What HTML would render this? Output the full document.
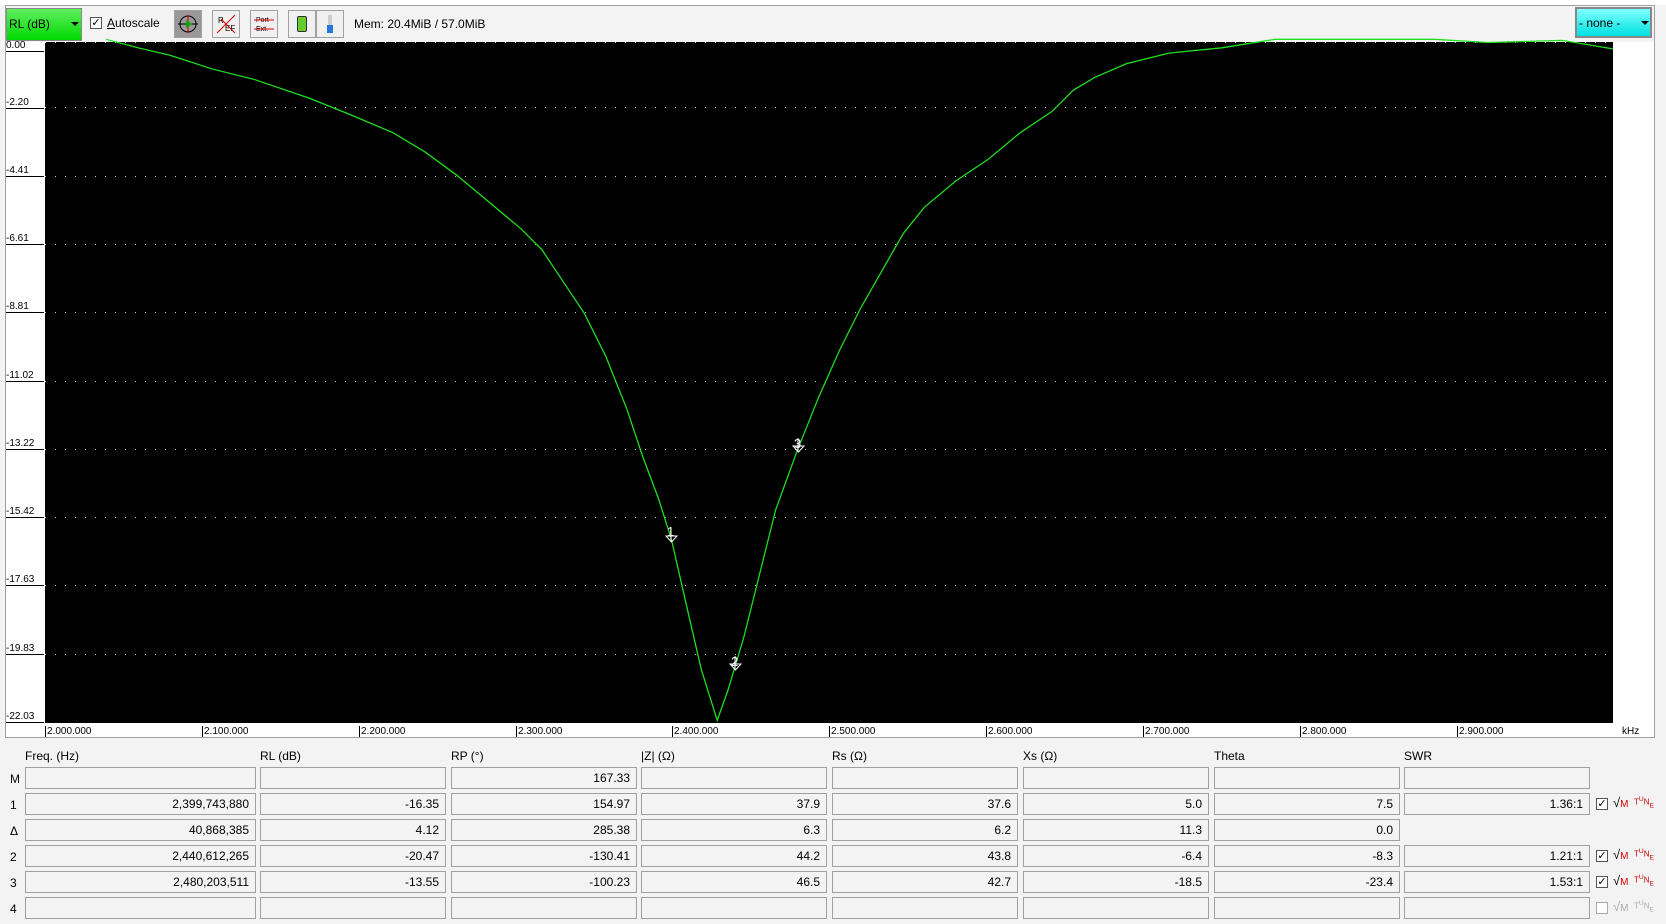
<!DOCTYPE html>
<html><head><meta charset="utf-8"><style>
*{margin:0;padding:0;box-sizing:border-box}
body{width:1666px;height:924px;background:#f3f3f3;font-family:"Liberation Sans",sans-serif;font-size:12px;color:#000;position:relative;overflow:hidden}
.a{position:absolute}
.btn{position:absolute;top:10px;width:28px;height:28px;border:1px solid #a0a0a0;background:#f0f0f0}
.box{position:absolute;height:22px;border:1px solid #a0a0a0;background:#f3f3f3;text-align:right;padding-right:6px;line-height:20px;font-size:12px}
.hd{position:absolute;top:749px;font-size:12px}
.rl{position:absolute;left:10px;font-size:12px}
.yl{position:absolute;left:6px;font-size:10px;width:38px;border-bottom:1px solid #000;line-height:11px}
.xl{position:absolute;top:726px;font-size:10px;border-left:1px solid #000;padding-left:1px;line-height:11px}
.cb{position:absolute;width:12px;height:12px;border:1px solid #555;background:#fff;font-size:11px;line-height:10px;text-align:center}
.ic{position:absolute;font-size:10px;color:#c00;font-weight:bold}
</style></head><body>
<div class="a" style="left:0;top:0;width:1666px;height:5px;background:#fff"></div>
<div class="a" style="left:5px;top:5px;width:1650px;height:733px;border:1px solid #a0a0a0;background:#fff"></div>
<div class="a" style="left:6px;top:6px;width:1648px;height:36px;background:#f3f3f3"></div>
<div class="a" style="left:6px;top:8px;width:76px;height:33px;background:linear-gradient(#60f060,#00d800);border:1px solid #888;"></div>
<div class="a" style="left:9px;top:17px;font-size:12px">RL (dB)</div>
<div class="a" style="left:71px;top:22px;border-left:4px solid transparent;border-right:4px solid transparent;border-top:4px solid #000"></div>
<div class="cb" style="left:90px;top:17px">✓</div>
<div class="a" style="left:107px;top:16px"><u>A</u>utoscale</div>
<div class="btn" style="left:174px;background:#999"><svg width="26" height="26"><circle cx="13" cy="13" r="8" fill="none" stroke="#000"/><line x1="3" y1="13" x2="23" y2="13" stroke="#000"/><line x1="13" y1="4" x2="13" y2="22" stroke="#c00"/><path d="M11 9 L17 13 L11 17Z" fill="#0a0"/></svg></div>
<div class="btn" style="left:212px"><svg width="26" height="26"><text x="5" y="12" font-size="8" font-family="Liberation Sans">R</text><text x="12" y="20" font-size="8" font-family="Liberation Sans">EF</text><line x1="4" y1="22" x2="22" y2="4" stroke="#d00"/><line x1="8" y1="8" x2="22" y2="22" stroke="#d00"/></svg></div>
<div class="btn" style="left:250px"><svg width="26" height="26"><text x="5" y="11" font-size="7" font-family="Liberation Sans">Port</text><text x="5" y="20" font-size="7" font-family="Liberation Sans">Ext.</text><line x1="3" y1="9" x2="23" y2="9" stroke="#d00"/><line x1="3" y1="18" x2="23" y2="18" stroke="#d00"/></svg></div>
<div class="btn" style="left:288px"><div class="a" style="left:8px;top:5px;width:10px;height:16px;background:#6c3;border:1px solid #333;border-radius:2px"></div></div>
<div class="btn" style="left:316px"><div class="a" style="left:11px;top:4px;width:4px;height:14px;background:#ccc"></div><div class="a" style="left:10px;top:14px;width:6px;height:8px;background:#2677d9"></div></div>
<div class="a" style="left:354px;top:17px">Mem: 20.4MiB / 57.0MiB</div>
<div class="a" style="left:1575px;top:7px;width:77px;height:31px;background:linear-gradient(#80ffff,#00e0e0);border:2px solid #888"></div>
<div class="a" style="left:1579px;top:16px">- none -</div>
<div class="a" style="left:1641px;top:21px;border-left:4px solid transparent;border-right:4px solid transparent;border-top:4px solid #000"></div>
<div class="a" style="left:45px;top:42px;width:1568px;height:681px;background:#000"></div>
<svg class="a" style="left:0;top:0" width="1666" height="924">
<g stroke="#ccc" stroke-dasharray="1 9" stroke-width="1">
<line x1="45" y1="107.5" x2="1613" y2="107.5"/><line x1="45" y1="176.5" x2="1613" y2="176.5"/><line x1="45" y1="244.5" x2="1613" y2="244.5"/><line x1="45" y1="312.5" x2="1613" y2="312.5"/><line x1="45" y1="381.5" x2="1613" y2="381.5"/><line x1="45" y1="449.5" x2="1613" y2="449.5"/><line x1="45" y1="517.5" x2="1613" y2="517.5"/><line x1="45" y1="585.5" x2="1613" y2="585.5"/><line x1="45" y1="654.5" x2="1613" y2="654.5"/><line x1="45" y1="42.5" x2="1613" y2="42.5"/>
</g>
<g transform="scale(1.0625)"><polyline fill="none" stroke="#1fe01f" stroke-width="1.2" points="100,37 130,45 160,52 200,65 240,75 290,92 330,108 370,125 400,143 430,165 460,190 490,215 510,235 530,265 550,295 570,335 590,385 605,430 620,470 632,508 645,565 660,630 675,678 685,650 700,600 715,540 730,480 750,425 770,375 790,330 810,290 830,255 850,220 870,195 900,170 930,150 960,125 990,105 1010,85 1030,73 1060,60 1100,50 1150,45 1200,37 1350,37 1400,40 1470,38 1518,46"/></g>
<g fill="none" stroke="#fff" font-family="Liberation Sans" font-size="13">
<path d="M666 536 h11 l-5.5 6z M671 528 v14"/><path d="M730 664 h11 l-5.5 6z M735 656 v14"/><path d="M793 446 h11 l-5.5 6z M798 438 v14"/>
</g>
<g fill="#fff" font-family="Liberation Sans" font-size="13"><text x="667" y="536">1</text><text x="731" y="666">2</text><text x="794" y="448">3</text></g>
</svg>
<div class="yl" style="top:40px">0.00</div><div class="yl" style="top:97px">-2.20</div><div class="yl" style="top:165px">-4.41</div><div class="yl" style="top:233px">-6.61</div><div class="yl" style="top:301px">-8.81</div><div class="yl" style="top:370px">-11.02</div><div class="yl" style="top:438px">-13.22</div><div class="yl" style="top:506px">-15.42</div><div class="yl" style="top:574px">-17.63</div><div class="yl" style="top:643px">-19.83</div><div class="yl" style="top:711px">-22.03</div>
<div class="xl" style="left:45px">2.000.000</div><div class="xl" style="left:202px">2.100.000</div><div class="xl" style="left:359px">2.200.000</div><div class="xl" style="left:516px">2.300.000</div><div class="xl" style="left:672px">2.400.000</div><div class="xl" style="left:829px">2.500.000</div><div class="xl" style="left:986px">2.600.000</div><div class="xl" style="left:1143px">2.700.000</div><div class="xl" style="left:1300px">2.800.000</div><div class="xl" style="left:1457px">2.900.000</div>
<div class="a" style="left:1622px;top:726px;font-size:10px">kHz</div>
<div class="hd" style="left:25px">Freq. (Hz)</div><div class="hd" style="left:260px">RL (dB)</div><div class="hd" style="left:451px">RP (°)</div><div class="hd" style="left:641px">|Z| (Ω)</div><div class="hd" style="left:832px">Rs (Ω)</div><div class="hd" style="left:1023px">Xs (Ω)</div><div class="hd" style="left:1214px">Theta</div><div class="hd" style="left:1404px">SWR</div>
<div class="rl" style="top:772px">M</div><div class="rl" style="top:798px">1</div><div class="rl" style="top:824px">Δ</div><div class="rl" style="top:850px">2</div><div class="rl" style="top:876px">3</div><div class="rl" style="top:902px">4</div>
<div id="t"></div>
<script>
var L=[25,260,451,641,832,1023,1214,1404],W=[231,186,186,186,186,186,186,186];
var R=[["","","167.33","","","","",""],["2,399,743,880","-16.35","154.97","37.9","37.6","5.0","7.5","1.36:1"],["40,868,385","4.12","285.38","6.3","6.2","11.3","0.0",null],["2,440,612,265","-20.47","-130.41","44.2","43.8","-6.4","-8.3","1.21:1"],["2,480,203,511","-13.55","-100.23","46.5","42.7","-18.5","-23.4","1.53:1"],["","","","","","","",""]];
var h="";
for(var r=0;r<6;r++){var y=767+r*26;for(var c=0;c<8;c++){if(R[r][c]===null)continue;h+='<div class="box" style="left:'+L[c]+'px;top:'+y+'px;width:'+W[c]+'px">'+R[r][c]+'</div>';}
if(r==1||r==3||r==4||r==5){var g=r==5;h+='<div class="cb" style="left:1596px;top:'+(y+5)+'px;'+(g?'border-color:#aaa':'')+'">'+(g?'':'✓')+'</div>';
h+='<div class="ic" style="left:1613px;top:'+(y+2)+'px;color:'+(g?'#aaa':'#000')+';font-weight:normal;font-size:13px">√<span style="color:'+(g?'#aaa':'#d00')+';font-size:10px">M</span></div>';
h+='<div class="ic" style="left:1634px;top:'+(y+3)+'px;color:'+(g?'#aaa':'#c00')+';font-size:8px;font-weight:normal">T<sup>U</sup>N<sub>E</sub></div>';}}
document.getElementById("t").innerHTML=h;
</script>
</body></html>
